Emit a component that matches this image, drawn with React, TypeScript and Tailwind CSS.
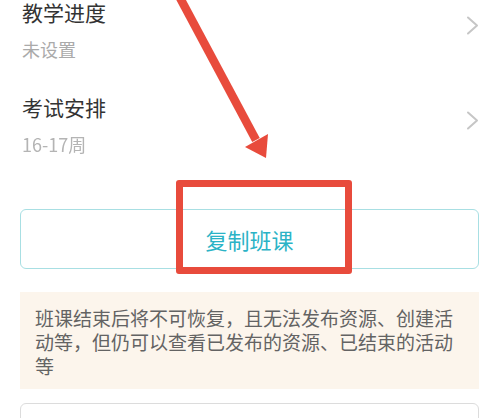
import React from 'react';

const font = { fontFamily: '"Noto Sans CJK SC", "Noto Sans", sans-serif' };

function Chevron() {
  return (
    <svg width="13" height="19" viewBox="0 0 13 19" className="mt-[18px] shrink-0">
      <polyline
        points="2,1.5 11,9.5 2,17.5"
        fill="none"
        stroke="#c6c6c6"
        strokeWidth="2"
        strokeLinecap="round"
        strokeLinejoin="round"
      />
    </svg>
  );
}

function InfoRow({ title, value, blurred }: { title: string; value: string; blurred?: boolean }) {
  return (
    <div className="flex h-[95px] items-start justify-between">
      <div>
        <div className="text-[21px] leading-[28px] text-[#333333]">{title}</div>
        <div
          className={
            blurred
              ? 'mt-[11px] text-[18px] leading-[24px] text-[#b4b4b4] blur-[0.6px]'
              : 'mt-[11px] text-[18px] leading-[24px] text-[#aaaaaa]'
          }
        >
          {value}
        </div>
      </div>
      <Chevron />
    </div>
  );
}

export default function App() {
  return (
    <div className="relative h-[418px] w-[489px] overflow-hidden bg-white" style={font}>
      <div className="-mt-[2px] pl-[22px] pr-[10px]">
        <InfoRow title="教学进度" value="未设置" />
        <InfoRow title="考试安排" value="16-17周" blurred />
      </div>

      <div className="pl-[20px] pr-[10px]">
        <button
          type="button"
          className="mt-[21px] flex h-[60px] w-full items-center justify-center rounded-[6px] border border-[#a8dfe3] bg-white text-[22px] text-[#2bb3c6]"
        >
          复制班课
        </button>

        <div className="mt-[23px] bg-[#fcf5ec] px-[15px] pb-[11px] pt-[14px] text-[19px] leading-[24px] text-[#636363]">
          班课结束后将不可恢复，且无法发布资源、创建活动等，但仍可以查看已发布的资源、已结束的活动等
        </div>

        <div className="mt-[14px] h-[60px] rounded-[6px] border border-[#dcdcdc]" />
      </div>

      {/* annotation: red frame */}
      <div className="absolute left-[176px] top-[180px] h-[94px] w-[176px] rounded-[3px] border-[7px] border-[#e84b3c]" />

      {/* annotation: red arrow */}
      <svg className="absolute left-0 top-0" width="489" height="418" viewBox="0 0 489 418">
        <line x1="179" y1="-4" x2="256" y2="140" stroke="#e84b3c" strokeWidth="8.5" />
        <polygon points="245,147 268,134 266,158" fill="#e84b3c" />
      </svg>
    </div>
  );
}
